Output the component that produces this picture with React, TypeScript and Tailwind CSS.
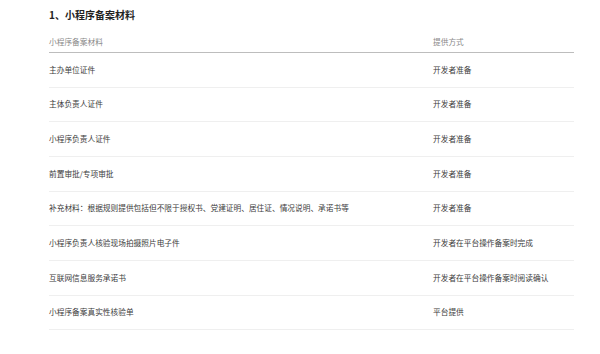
import React from 'react';

const rows = [
  { name: '主办单位证件', way: '开发者准备' },
  { name: '主体负责人证件', way: '开发者准备' },
  { name: '小程序负责人证件', way: '开发者准备' },
  { name: '前置审批/专项审批', way: '开发者准备' },
  {
    name: '补充材料：根据规则提供包括但不限于授权书、党建证明、居住证、情况说明、承诺书等',
    way: '开发者准备',
  },
  { name: '小程序负责人核验现场拍摄照片电子件', way: '开发者在平台操作备案时完成' },
  { name: '互联网信息服务承诺书', way: '开发者在平台操作备案时阅读确认' },
  { name: '小程序备案真实性核验单', way: '平台提供' },
];

const App = () => {
  return (
    <div className="min-h-[354px] w-[600px] bg-white pl-[49px] pt-[8px] font-['Noto_Sans_CJK_SC',sans-serif]">
      <h2 className="h-[14px] text-[10px] font-bold leading-[14px] text-[#222]">1、小程序备案材料</h2>

      <div className="w-[525px]">
        <div className="flex h-[31px] items-end border-b border-[#bdbdbd] pb-[5px] text-[7.7px] leading-[10px] text-[#888]">
          <div className="w-[384px]">小程序备案材料</div>
          <div className="flex-1">提供方式</div>
        </div>

        {rows.map((row) => (
          <div
            key={row.name}
            className="flex h-[34.67px] items-center border-b border-[#efefef] text-[7.7px] leading-[10px] text-[#3c3c3c]"
          >
            <div className="w-[384px]">{row.name}</div>
            <div className="flex-1">{row.way}</div>
          </div>
        ))}
      </div>
    </div>
  );
};

export default App;
